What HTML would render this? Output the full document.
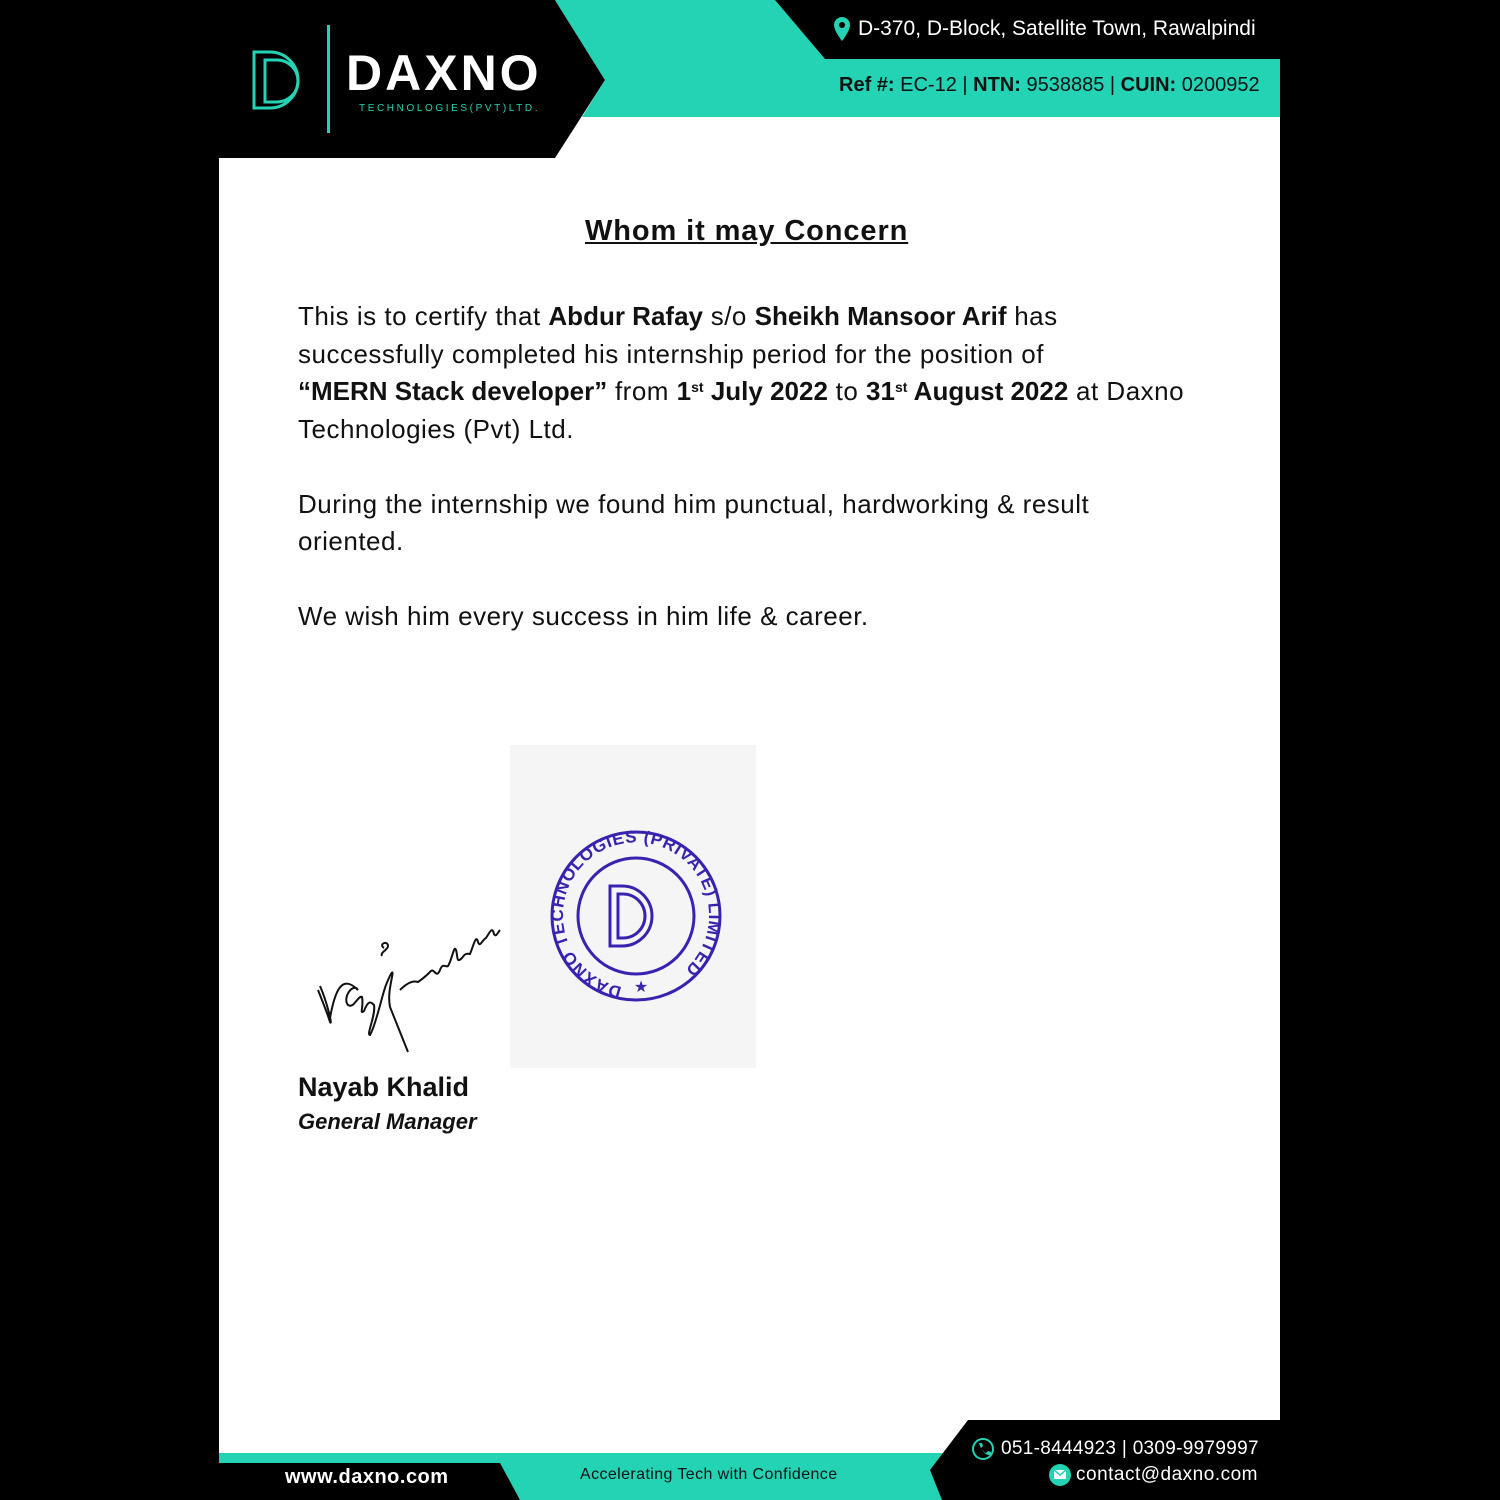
<!DOCTYPE html>
<html><head><meta charset="utf-8"><style>
*{margin:0;padding:0;box-sizing:border-box}
html,body{width:1500px;height:1500px;background:#000;overflow:hidden;font-family:"Liberation Sans",sans-serif}
.paper{position:absolute;left:219px;top:0;width:1061px;height:1500px;background:#fff}
svg.abs{position:absolute;left:0;top:0}
.t{position:absolute;white-space:nowrap}
.body{position:absolute;left:298px;top:298px;font-size:26px;line-height:37.5px;color:#111;letter-spacing:0.5px;white-space:nowrap}
.body b{font-weight:bold;letter-spacing:0}
sup{font-size:14px;vertical-align:top;position:relative;top:-4px}
</style></head><body>
<div class="paper"></div>
<svg class="abs" width="1500" height="1500">
 <polygon points="219,0 555,0 605,80 555,158 219,158" fill="#000"/>
 <polygon points="555,0 775,0 825,59 1280,59 1280,117 582,117 605,80" fill="#24d3b4"/>
 <polygon points="775,0 1280,0 1280,59 825,59" fill="#000"/>
 <rect x="327" y="25" width="3" height="108" fill="#24d3b4"/>
 <g fill="none" stroke="#24d3b4" stroke-width="3">
  <path d="M254,52 h16 a28,28 0 0 1 0,56 h-16 z"/>
  <path d="M265,60 h12 a21,21 0 0 1 0,42 h-12 z"/>
 </g>
 <path d="M842,17 a8,8 0 0 1 8,8 c0,6 -8,16 -8,16 c0,0 -8,-10 -8,-16 a8,8 0 0 1 8,-8z" fill="#24d3b4"/>
 <circle cx="842" cy="25" r="3" fill="#000"/>
 <rect x="219" y="1453" width="1061" height="47" fill="#24d3b4"/>
 <polygon points="219,1463 500,1463 520,1500 219,1500" fill="#000"/>
 <polygon points="968,1420 1280,1420 1280,1500 942,1500 930,1470" fill="#000"/>
 <circle cx="983" cy="1449" r="10" fill="none" stroke="#24d3b4" stroke-width="2"/>
 <path d="M979,1443 l3,0 l1,3 l-2,2 q2,4 5,5 l2,-2 l3,1 l0,3 q-8,1 -12,-12z" fill="#24d3b4"/>
 <circle cx="1060" cy="1475" r="11" fill="#24d3b4"/>
 <rect x="1054" y="1470" width="12" height="9" fill="#fff"/>
 <path d="M1054,1470 l6,5 l6,-5" stroke="#24d3b4" stroke-width="1.5" fill="none"/>
 <rect x="510" y="745" width="246" height="323" fill="#f5f5f5"/>
 <g stroke="#3a22b0" fill="none">
  <circle cx="636" cy="916" r="84" stroke-width="3"/>
  <circle cx="636" cy="916" r="58" stroke-width="3"/>
  <path d="M610,886 h12 a30,30 0 0 1 0,60 h-12z" stroke-width="3"/>
  <path d="M618,894 h5 a22,22 0 0 1 0,44 h-5z" stroke-width="3"/>
  <path id="arc" d="M622,987 a73,73 0 1 1 28,0" stroke="none"/>
 </g>
 <text font-family="Liberation Sans" font-weight="bold" font-size="17" fill="#3a22b0" letter-spacing="0.8"><textPath href="#arc" startOffset="0">DAXNO TECHNOLOGIES (PRIVATE) LIMITED</textPath></text>
 <text x="641" y="992" font-size="16" fill="#3a22b0" text-anchor="middle">★</text>
 <g stroke="#111" stroke-width="2" fill="none">
  <path d="M318,990 c4,10 10,25 12,32 c3,5 -3,-20 -10,-36 M330,1018 c5,-28 12,-44 28,-28 c-5,-8 -16,8 -10,15 c6,4 10,-10 14,-8 c2,10 -3,18 2,14 c4,-10 6,-10 10,-6 c2,10 -8,30 -4,30 c6,-10 12,-40 16,-50 c4,-10 8,-18 6,-8 c-2,10 -4,20 -2,30 l18,45"/>
  <path d="M384,948 c-6,-4 4,-8 4,-2 c0,4 -8,6 -6,10"/>
  <path d="M400,990 c6,-6 12,-10 18,-8 c6,-4 8,-6 12,-10 c4,-6 6,8 10,-2 c3,-8 6,-2 8,-4 c4,-6 6,-22 8,-16 c2,6 0,14 6,8 c4,-6 6,-4 8,-4 c4,-10 6,-20 8,-12 c2,6 4,-2 8,-4 c4,-6 6,-12 8,-4 c2,4 4,-2 6,-4"/>
 </g>
</svg>
<div class="t" style="left:346px;top:44px;font-size:50px;font-weight:bold;color:#fff;letter-spacing:3px">DAXNO</div>
<div class="t" style="left:359px;top:103px;font-size:10px;color:#24d3b4;letter-spacing:2.6px">TECHNOLOGIES(PVT)LTD.</div>
<div class="t" style="left:858px;top:17px;font-size:21px;color:#fff">D-370, D-Block, Satellite Town, Rawalpindi</div>
<div class="t" style="left:839px;top:74px;font-size:20px;color:#111"><b>Ref #:</b> EC-12 | <b>NTN:</b> 9538885 | <b>CUIN:</b> 0200952</div>
<div class="t" style="left:585px;top:215px;font-size:29px;font-weight:bold;color:#111;text-decoration:underline;letter-spacing:0.9px">Whom it may Concern</div>
<div class="body">This is to certify that <b>Abdur Rafay</b> s/o <b>Sheikh Mansoor Arif</b> has<br>successfully completed his internship period for the position of<br><b>“MERN Stack developer”</b> from <b>1<sup>st</sup> July 2022</b> to <b>31<sup>st</sup> August 2022</b> at Daxno<br>Technologies (Pvt) Ltd.<br><div style="height:37.5px"></div>During the internship we found him punctual, hardworking &amp; result<br>oriented.<br><div style="height:37.5px"></div>We wish him every success in him life &amp; career.</div>
<div class="t" style="left:298px;top:1072px;font-size:27px;font-weight:bold;color:#111">Nayab Khalid</div>
<div class="t" style="left:298px;top:1109px;font-size:22px;font-weight:bold;font-style:italic;color:#111">General Manager</div>
<div class="t" style="left:285px;top:1466px;font-size:20px;font-weight:bold;color:#fff;letter-spacing:0.5px">www.daxno.com</div>
<div class="t" style="left:580px;top:1466px;font-size:16px;color:#111;letter-spacing:0.4px">Accelerating Tech with Confidence</div>
<div class="t" style="left:1001px;top:1438px;font-size:19px;color:#fff;letter-spacing:0.3px">051-8444923 | 0309-9979997</div>
<div class="t" style="left:1076px;top:1464px;font-size:19px;color:#fff;letter-spacing:0.5px">contact@daxno.com</div>
</body></html>
